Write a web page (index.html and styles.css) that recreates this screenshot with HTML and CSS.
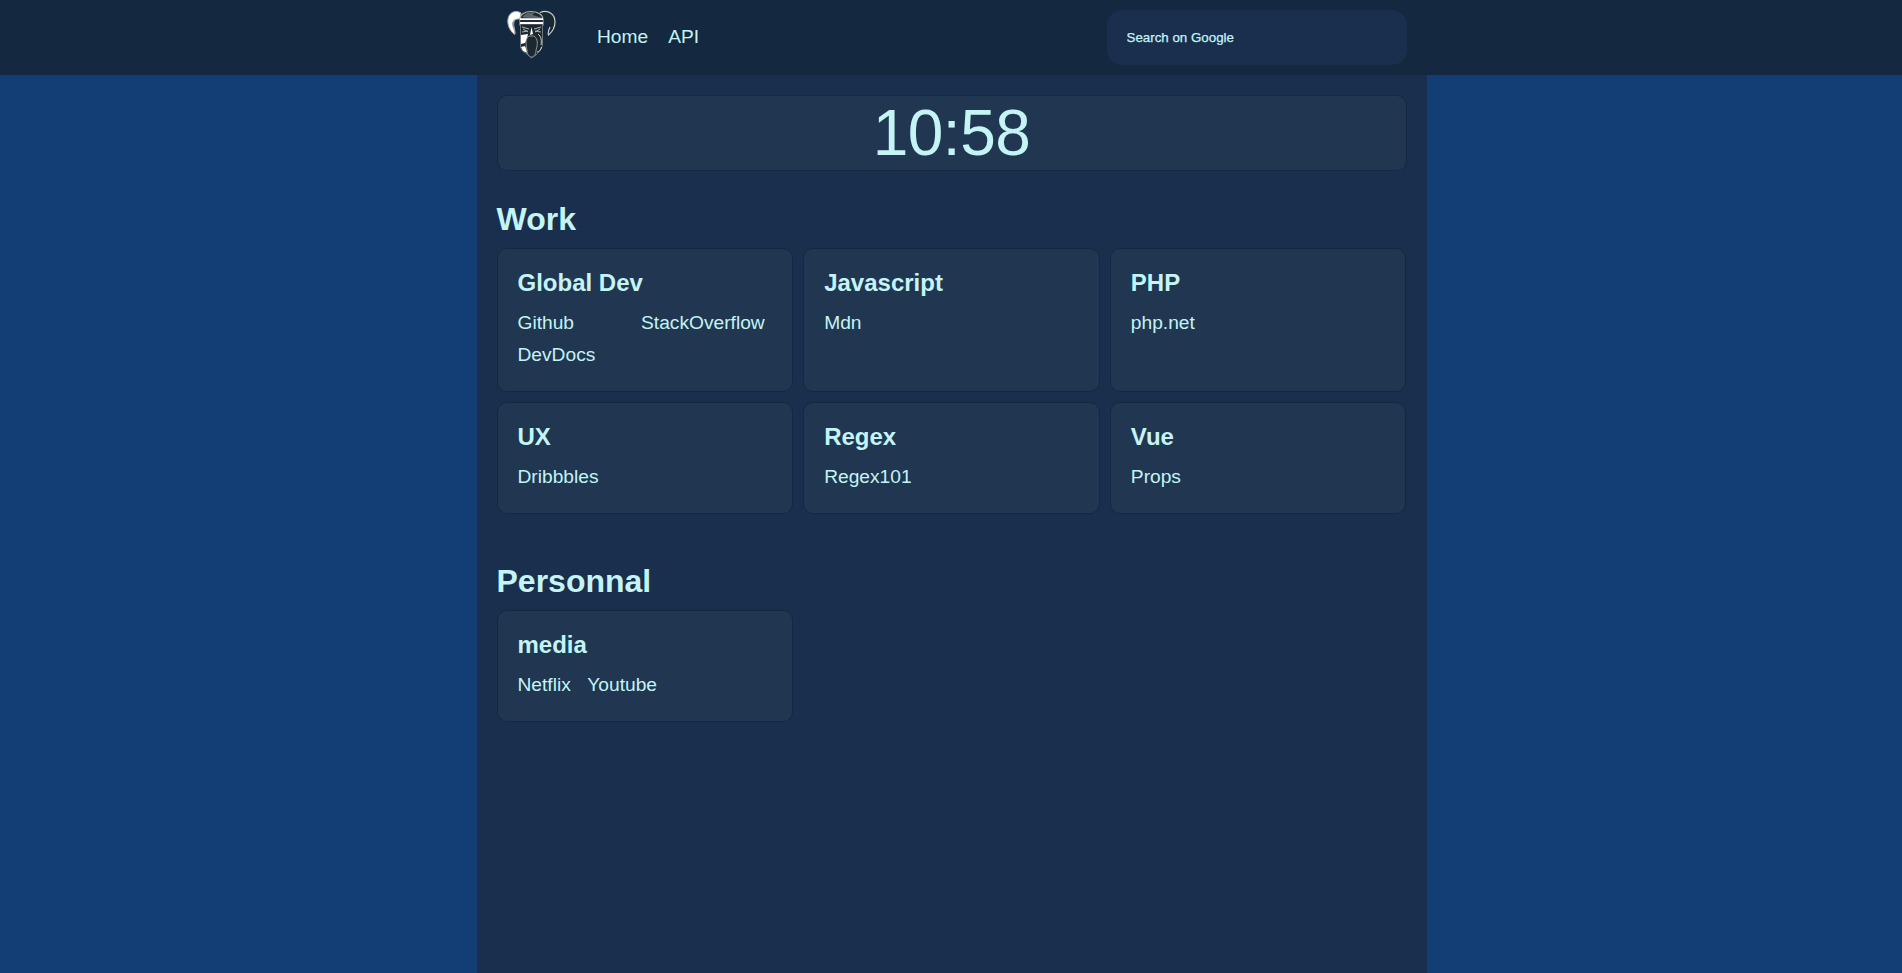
FILE: index.html
```html
<!DOCTYPE html>
<html lang="en">
<head>
<meta charset="utf-8">
<title>Home</title>
<link rel="stylesheet" href="styles.css">
</head>
<body>
<header class="topbar">
  <div class="topbar-inner">
    <a class="logo" href="#" aria-label="Home">
      <svg width="49" height="49" viewBox="0 0 49 49" fill="none">
        <path d="M14 3C9-.5 1 2 .8 11 .8 17 4 22 7.500 24.500 9 20 4 16 6 12 7 9 10 9 13 9Z" fill="#fff" stroke="#a9adad"/>
        <path d="M8 24C8 18 5 14 8 10" stroke="#b5b8b8"/>
        <path d="M33 2.500C42-1 48 5 48 12 48 18 45 22 41.500 25 39 20 44 16 43 12 42 9 39 8 36 9Z" fill="#1c282f"/>
        <path d="M33 2.500C42-1 48 5 48 12 48 18 45 22 41.500 25 40.500 22 42 19 43 17" stroke="#c9cccb" stroke-width="1.200"/>
        <path d="M13 10C13 4 18 1.500 24 1.500S36 4 36 10V15H13Z" fill="#1c282f" stroke="#a9adad" stroke-width="1.200"/>
        <path d="M16 7C18 3.500 23 2.500 27 3L24 5 34 8Z" fill="#5a6366" stroke="#777f82" stroke-width=".6"/>
        <path d="M13.500 14H35.500V35C34 41 31 42 29 45L24.500 48 20 44C17 42 13.500 41 13.500 35Z" fill="#1c282f" stroke="#6f777a"/>
        <path d="M13 9.200H36M13 13H36" stroke="#fff" stroke-width="1.800"/>
        <path d="M13 11.100H36" stroke="#2b2942" stroke-width="1.700"/>
        <path d="M15 17L22 19M34 17L27 19M15 22L21 21M28 21L34 22M16 19L21 22M33 19L28 22" stroke="#aeb3b3"/>
        <path d="M24.500 17L26 24 23 25Z" fill="#fff"/>
        <path d="M14 25L21 24 20 29 18 33 14 34ZM14 37L18 36 20.500 43 16 41Z" fill="#fff"/>
        <path d="M22 26C18 29 19 35 20 40 20 44 22 47 24.500 47S29 44 29 40C31 34 31 29 27 26Z" fill="#1c282f" stroke="#8f9596"/>
        <path d="M31 24C34 26 35 31 34 35M34.500 37C34 40 32 42 30 42" stroke="#d0d3d2"/>
      </svg>
    </a>
    <nav class="nav">
      <a href="#">Home</a>
      <a href="#">API</a>
    </nav>
    <input class="search" type="text" placeholder="Search on Google" aria-label="Search">
  </div>
</header>
<main class="page">
  <div class="clock">10:58</div>
  <section class="group">
    <h2>Work</h2>
    <div class="cards">
      <article class="card"><h3>Global Dev</h3><div class="links links-wide"><a href="#">Github</a><a href="#">StackOverflow</a><a href="#">DevDocs</a></div></article>
      <article class="card"><h3>Javascript</h3><div class="links"><a href="#">Mdn</a></div></article>
      <article class="card"><h3>PHP</h3><div class="links"><a href="#">php.net</a></div></article>
      <article class="card"><h3>UX</h3><div class="links"><a href="#">Dribbbles</a></div></article>
      <article class="card"><h3>Regex</h3><div class="links"><a href="#">Regex101</a></div></article>
      <article class="card"><h3>Vue</h3><div class="links"><a href="#">Props</a></div></article>
    </div>
  </section>
  <section class="group">
    <h2>Personnal</h2>
    <div class="cards">
      <article class="card"><h3>media</h3><div class="links"><a href="#">Netflix</a><a href="#">Youtube</a></div></article>
    </div>
  </section>
</main>
</body>
</html>
```

FILE: styles.css
```css
* { box-sizing: border-box; margin: 0; padding: 0; }

body {
  display: flex;
  flex-direction: column;
  min-height: 100vh;
  background: #133e75;
  color: #c4f4f4;
  font-family: "Liberation Sans", Arial, sans-serif;
  font-size: 19.2px;
  line-height: 22px;
}

a { color: inherit; text-decoration: none; }

.topbar { background: #142840; }

.topbar-inner {
  display: flex;
  align-items: center;
  width: 950px;
  height: 75px;
  margin-left: calc(50% - 474.5px);
  padding: 0 20px;
}

.logo { height: 49px; margin: -7px 41px 0 10.5px; }
.logo svg { display: block; }

.nav { display: flex; gap: 20px; padding-bottom: 2px; }

.search {
  width: 300px;
  height: 55px;
  margin-left: auto;
  padding: 0 20px 1px;
  border: 0;
  border-radius: 15px;
  background: #1a2f4d;
  color: #c4f4f4;
  font: 13.333px "Liberation Sans", Arial, sans-serif;
  -webkit-text-stroke: 0.25px #c4f4f4;
}

.search::placeholder { color: #c4f4f4; opacity: 1; }

.page {
  flex: 1;
  width: 950px;
  margin-left: calc(50% - 474.5px);
  padding: 20px;
  background: #1a2f4d;
}

.clock, .card {
  border: 1px solid #142840;
  border-radius: 10px;
  background: #203651;
}

.clock {
  height: 76px;
  font-size: 64px;
  line-height: 74px;
  letter-spacing: -0.5px;
  text-align: center;
}

.group { margin-top: 29.6px; }
.group + .group { margin-top: 49.8px; }

h2 { margin-bottom: 10px; font-size: 32px; line-height: 37px; }
h3 { margin-bottom: 11px; font-size: 24px; line-height: 27px; }

.cards { display: grid; grid-template-columns: repeat(3, 1fr); gap: 10px; }
.card { padding: 20px; }

.links {
  display: grid;
  grid-template-columns: repeat(2, max-content);
  column-gap: 16.5px;
}

.links-wide { grid-template-columns: 123.5px max-content; column-gap: 0; }
.links a { padding: 5px 0; }
```
